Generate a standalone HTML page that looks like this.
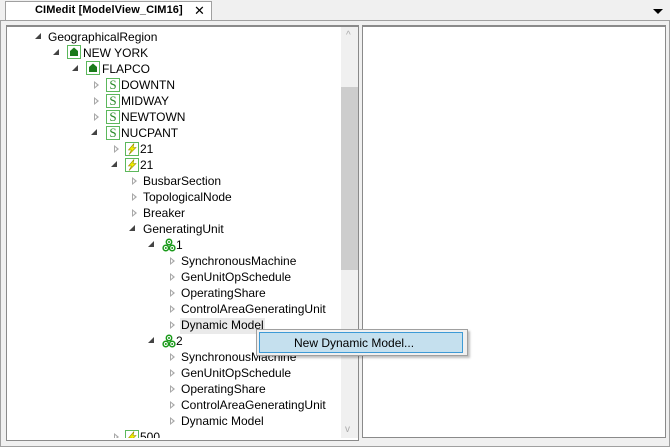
<!DOCTYPE html><html><head><style>
body{margin:0;width:670px;height:447px;background:#f0f0f0;font-family:"Liberation Sans",sans-serif;font-size:12px;color:#000;position:relative;overflow:hidden}
.a{position:absolute}
.r{position:absolute;height:16px;line-height:16px;white-space:nowrap}
.ex{position:absolute;width:0;height:0}
.o{border-top:4px solid transparent;border-bottom:4px solid transparent;border-left:5px solid #a8a8a8;}
.o::after{content:"";position:absolute;left:-4px;top:-2px;border-top:2px solid transparent;border-bottom:2px solid transparent;border-left:2px solid #fff}
.d{border-left:6px solid transparent;border-bottom:6px solid #444}
.ic{position:absolute;width:14px;height:14px;border:1px solid #5cb85c;box-sizing:border-box;background:#fff}
.s{color:#2a8a2a;font-family:"Liberation Serif",serif;font-size:13px;line-height:12px;text-align:center}
</style></head><body>
<svg width="0" height="0" style="position:absolute"><defs>
<symbol id="bolt" viewBox="0 0 14 14"><rect x=".5" y=".5" width="13" height="13" fill="#fff" stroke="#5cb85c"/><path d="M9 1.5 L3.5 8 L6.5 8 L4 12.5 L11 5.5 L8 5.5 Z" fill="#f2f000" stroke="#9a9000" stroke-width=".6"/></symbol>
<symbol id="gen" viewBox="0 0 14 14"><g fill="#fff" stroke="#1a9a1a" stroke-width="1.5"><circle cx="7" cy="4" r="2.7"/><circle cx="3.8" cy="10" r="2.7"/><circle cx="10.2" cy="10" r="2.7"/></g><g fill="#1a9a1a"><circle cx="7" cy="4" r="1"/><circle cx="3.8" cy="10" r="1"/><circle cx="10.2" cy="10" r="1"/></g></symbol>
<symbol id="house" viewBox="0 0 14 14"><rect x=".5" y=".5" width="13" height="13" fill="#fff" stroke="#5cb85c"/><path d="M3 11 L3 6 L7 2.5 L11 6 L11 11 Z" fill="#1a7a1a"/></symbol>
</defs></svg>
<div class="a" style="left:0;top:0;width:669px;height:20px;border-bottom:1px solid #a0a0a0;background:#f0f0f0"></div>
<div class="a" style="left:5px;top:1px;width:205px;height:21px;background:#fff;border:1px solid #a0a0a0;border-bottom:none"></div>
<div class="a" style="left:35px;top:4px;font-weight:bold;font-size:11px;letter-spacing:0.1px">CIMedit [ModelView_CIM16]</div>
<div class="a" style="left:194px;top:3px;font-size:13px">✕</div>
<div class="a" style="left:653px;top:9px;border-left:5px solid transparent;border-right:5px solid transparent;border-top:5px solid #000"></div>
<div class="a" style="left:0;top:20px;width:668px;height:425px;border:1px solid #a0a0a0;background:#f0f0f0"></div>
<div class="a" style="left:6px;top:25px;width:351px;height:413px;border:1px solid #8a8a8a;border-top:2px solid #8a8a8a;background:#fff"></div>
<div class="a" style="left:341px;top:27px;width:17px;height:411px;background:#f0f0f0"></div>
<div class="a" style="left:341px;top:87px;width:17px;height:183px;background:#cdcdcd"></div>
<div class="a" style="left:346px;top:30px;color:#aaa;font-size:10px">^</div>
<div class="a" style="left:345px;top:424px;color:#aaa;font-size:10px">v</div>
<div class="a" style="left:362px;top:25px;width:302px;height:410px;border:1px solid #8a8a8a;border-top:2px solid #8a8a8a;background:#fff"></div>
<div class="a" style="left:180px;top:318px;width:85px;height:16px;background:#eaeaea"></div>
<div style="position:absolute;left:0;top:1px;width:340px;height:437px;overflow:hidden">
<div class="ex d a" style="left:35px;top:32px"></div><div class="r" style="left:48px;top:28px">GeographicalRegion</div>
<div class="ex d a" style="left:53px;top:48px"></div><svg class="a" style="left:67px;top:44px" width="14" height="14"><use href="#house"/></svg><div class="r" style="left:83px;top:44px">NEW YORK</div>
<div class="ex d a" style="left:72px;top:64px"></div><svg class="a" style="left:86px;top:60px" width="14" height="14"><use href="#house"/></svg><div class="r" style="left:102px;top:60px">FLAPCO</div>
<div class="ex o a" style="left:94px;top:80px"></div><div class="ic s" style="left:106px;top:77px">S</div><div class="r" style="left:121px;top:76px">DOWNTN</div>
<div class="ex o a" style="left:94px;top:96px"></div><div class="ic s" style="left:106px;top:93px">S</div><div class="r" style="left:121px;top:92px">MIDWAY</div>
<div class="ex o a" style="left:94px;top:112px"></div><div class="ic s" style="left:106px;top:109px">S</div><div class="r" style="left:121px;top:108px">NEWTOWN</div>
<div class="ex d a" style="left:91px;top:128px"></div><div class="ic s" style="left:106px;top:125px">S</div><div class="r" style="left:121px;top:124px">NUCPANT</div>
<div class="ex o a" style="left:114px;top:144px"></div><svg class="a" style="left:125px;top:141px" width="14" height="14"><use href="#bolt"/></svg><div class="r" style="left:140px;top:140px">21</div>
<div class="ex d a" style="left:111px;top:160px"></div><svg class="a" style="left:125px;top:157px" width="14" height="14"><use href="#bolt"/></svg><div class="r" style="left:140px;top:156px">21</div>
<div class="ex o a" style="left:132px;top:176px"></div><div class="r" style="left:143px;top:172px">BusbarSection</div>
<div class="ex o a" style="left:132px;top:192px"></div><div class="r" style="left:143px;top:188px">TopologicalNode</div>
<div class="ex o a" style="left:132px;top:208px"></div><div class="r" style="left:143px;top:204px">Breaker</div>
<div class="ex d a" style="left:129px;top:224px"></div><div class="r" style="left:143px;top:220px">GeneratingUnit</div>
<div class="ex d a" style="left:148px;top:240px"></div><svg class="a" style="left:162px;top:237px" width="14" height="14"><use href="#gen"/></svg><div class="r" style="left:176px;top:236px">1</div>
<div class="ex o a" style="left:170px;top:256px"></div><div class="r" style="left:181px;top:252px">SynchronousMachine</div>
<div class="ex o a" style="left:170px;top:272px"></div><div class="r" style="left:181px;top:268px">GenUnitOpSchedule</div>
<div class="ex o a" style="left:170px;top:288px"></div><div class="r" style="left:181px;top:284px">OperatingShare</div>
<div class="ex o a" style="left:170px;top:304px"></div><div class="r" style="left:181px;top:300px">ControlAreaGeneratingUnit</div>
<div class="ex o a" style="left:170px;top:320px"></div><div class="r" style="left:181px;top:316px">Dynamic Model</div>
<div class="ex d a" style="left:148px;top:336px"></div><svg class="a" style="left:162px;top:333px" width="14" height="14"><use href="#gen"/></svg><div class="r" style="left:176px;top:332px">2</div>
<div class="ex o a" style="left:170px;top:352px"></div><div class="r" style="left:181px;top:348px">SynchronousMachine</div>
<div class="ex o a" style="left:170px;top:368px"></div><div class="r" style="left:181px;top:364px">GenUnitOpSchedule</div>
<div class="ex o a" style="left:170px;top:384px"></div><div class="r" style="left:181px;top:380px">OperatingShare</div>
<div class="ex o a" style="left:170px;top:400px"></div><div class="r" style="left:181px;top:396px">ControlAreaGeneratingUnit</div>
<div class="ex o a" style="left:170px;top:416px"></div><div class="r" style="left:181px;top:412px">Dynamic Model</div>
<div class="ex o a" style="left:114px;top:432px"></div><svg class="a" style="left:125px;top:429px" width="14" height="14"><use href="#bolt"/></svg><div class="r" style="left:140px;top:428px">500</div>
</div>
<div class="a" style="left:256px;top:329px;width:210px;height:25px;background:#f0f0f0;border:1px solid #a0a0a0;box-shadow:2px 2px 2px rgba(0,0,0,.25)"></div>
<div class="a" style="left:259px;top:332px;width:202px;height:19px;background:#c5e0ee;border:1px solid #3d9ad6"></div>
<div class="r" style="left:294px;top:335px">New Dynamic Model...</div>
</body></html>
